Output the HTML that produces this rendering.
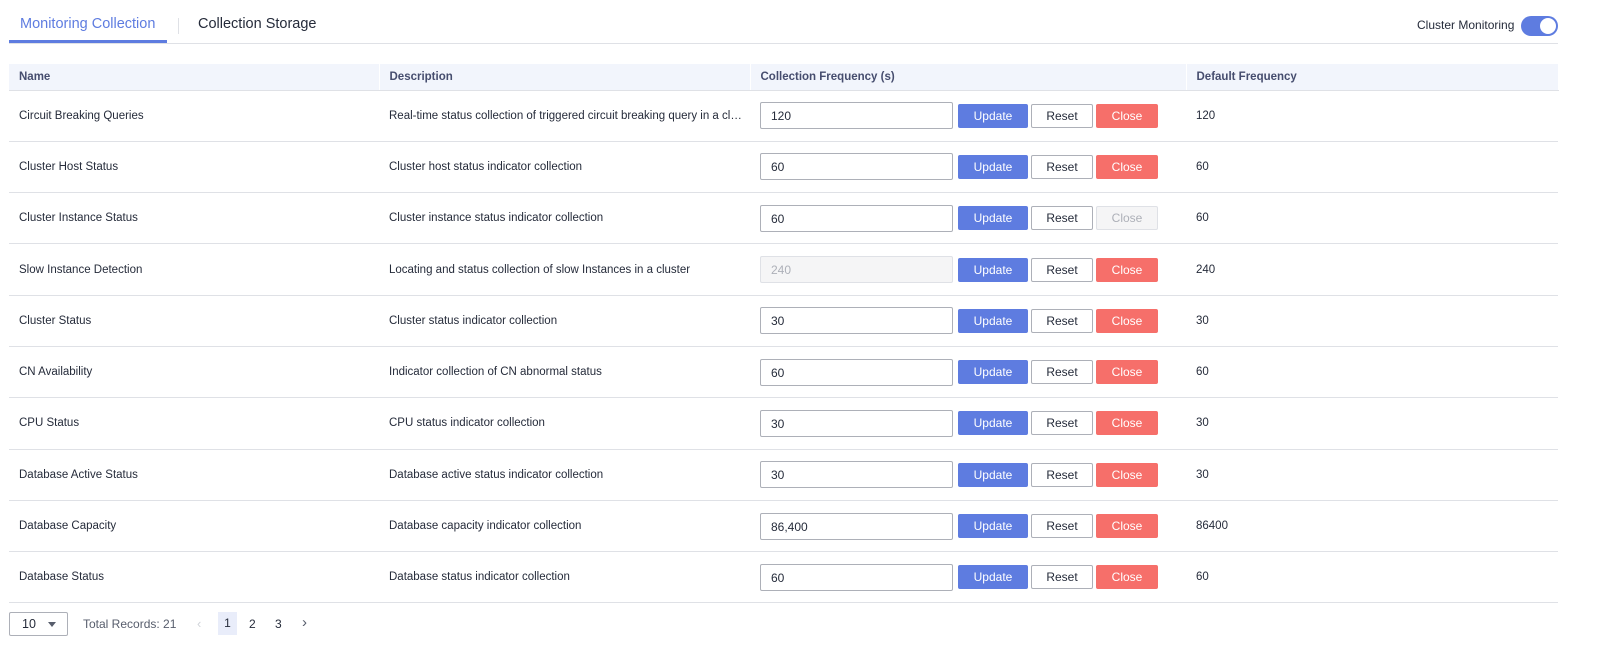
<!DOCTYPE html>
<html><head><meta charset="utf-8"><style>
*{box-sizing:border-box;margin:0;padding:0}
body{width:1619px;height:671px;background:#fff;font-family:"Liberation Sans",sans-serif;color:#252b3a;font-size:12px;position:relative;overflow:hidden}
.abs{position:absolute}
.tabline{left:9px;top:43px;width:1549px;height:1px;background:#dfe1e6}
.tab1{left:9px;top:40px;width:158px;height:3px;background:#5e7ce0}
.tt{top:16px;font-size:14.5px}
table{position:absolute;left:9px;top:64px;width:1549px;border-collapse:collapse;table-layout:fixed}
th{background:#f2f5fc;height:26px;text-align:left;font-weight:bold;font-size:11.5px;padding-left:10px;color:#464d6e;border-bottom:1px solid #dfe1e6;border-right:1px solid #fff}
td{height:51.3px;padding-left:10px;padding-right:8px;border-bottom:1px solid #dfe1e6;white-space:nowrap;overflow:hidden;text-overflow:ellipsis;font-size:11.5px}
.inp{display:inline-block;width:193px;height:27px;border:1px solid #adb0b8;border-radius:2px;padding-left:10px;padding-top:1px;line-height:25px;vertical-align:middle;font-size:12px}
.inp.dis{background:#f5f5f6;border-color:#dfe1e6;color:#adb0b8}
.b{display:inline-block;height:24px;line-height:22px;text-align:center;border-radius:2px;vertical-align:middle;font-size:12px;margin-left:3px}
.u{width:70px;background:#5e7ce0;color:#fff;border:1px solid #5e7ce0;margin-left:5px}
.r{width:62px;background:#fff;border:1px solid #adb0b8}
.c{width:62px;background:#f66f6a;color:#fff;border:1px solid #f66f6a}
.c.dis{background:#f5f5f6;border-color:#dfe1e6;color:#adb0b8}
</style></head><body>
<div class="abs tabline"></div><div class="abs tab1"></div>
<div class="abs tt" style="left:20px;color:#5e7ce0">Monitoring Collection</div>
<div class="abs" style="left:178px;top:18px;width:1px;height:16px;background:#dfe1e6"></div>
<div class="abs tt" style="left:198px">Collection Storage</div>
<div class="abs" style="left:1417px;top:18px;font-size:12px">Cluster Monitoring</div>
<div class="abs" style="left:1521px;top:16px;width:37px;height:20px;border-radius:10px;background:#5e7ce0"><div style="position:absolute;right:2px;top:2px;width:16px;height:16px;border-radius:50%;background:#fff"></div></div>
<table>
<colgroup><col style="width:370px"><col style="width:371px"><col style="width:436px"><col style="width:372px"></colgroup>
<tr><th>Name</th><th>Description</th><th>Collection Frequency (s)</th><th>Default Frequency</th></tr>
<tr><td>Circuit Breaking Queries</td><td>Real-time status collection of triggered circuit breaking query in a cluster</td><td><span class="inp">120</span><span class="b u">Update</span><span class="b r">Reset</span><span class="b c">Close</span></td><td>120</td></tr>
<tr><td>Cluster Host Status</td><td>Cluster host status indicator collection</td><td><span class="inp">60</span><span class="b u">Update</span><span class="b r">Reset</span><span class="b c">Close</span></td><td>60</td></tr>
<tr><td>Cluster Instance Status</td><td>Cluster instance status indicator collection</td><td><span class="inp">60</span><span class="b u">Update</span><span class="b r">Reset</span><span class="b c dis">Close</span></td><td>60</td></tr>
<tr><td>Slow Instance Detection</td><td>Locating and status collection of slow Instances in a cluster</td><td><span class="inp dis">240</span><span class="b u">Update</span><span class="b r">Reset</span><span class="b c">Close</span></td><td>240</td></tr>
<tr><td>Cluster Status</td><td>Cluster status indicator collection</td><td><span class="inp">30</span><span class="b u">Update</span><span class="b r">Reset</span><span class="b c">Close</span></td><td>30</td></tr>
<tr><td>CN Availability</td><td>Indicator collection of CN abnormal status</td><td><span class="inp">60</span><span class="b u">Update</span><span class="b r">Reset</span><span class="b c">Close</span></td><td>60</td></tr>
<tr><td>CPU Status</td><td>CPU status indicator collection</td><td><span class="inp">30</span><span class="b u">Update</span><span class="b r">Reset</span><span class="b c">Close</span></td><td>30</td></tr>
<tr><td>Database Active Status</td><td>Database active status indicator collection</td><td><span class="inp">30</span><span class="b u">Update</span><span class="b r">Reset</span><span class="b c">Close</span></td><td>30</td></tr>
<tr><td>Database Capacity</td><td>Database capacity indicator collection</td><td><span class="inp">86,400</span><span class="b u">Update</span><span class="b r">Reset</span><span class="b c">Close</span></td><td>86400</td></tr>
<tr><td>Database Status</td><td>Database status indicator collection</td><td><span class="inp">60</span><span class="b u">Update</span><span class="b r">Reset</span><span class="b c">Close</span></td><td>60</td></tr>
</table>
<div class="abs" style="left:9px;top:612px;width:59px;height:24px;border:1px solid #adb0b8;border-radius:2px;padding-left:12px;line-height:22px;font-size:12.5px">10<span style="position:absolute;left:38px;top:9px;border-left:4px solid transparent;border-right:4px solid transparent;border-top:5px solid #575d6c"></span></div>
<div class="abs" style="left:83px;top:617px;color:#575d6c">Total Records: 21</div>
<div class="abs" style="left:197px;top:616px;color:#d0d3d9;font-size:13px">&#8249;</div>
<div class="abs" style="left:218px;top:612px;width:19px;height:23px;background:#e9edfa;text-align:center;line-height:23px">1</div>
<div class="abs" style="left:249px;top:617px">2</div>
<div class="abs" style="left:275px;top:617px">3</div>
<div class="abs" style="left:302px;top:614px;font-size:15px;color:#575d6c">&#8250;</div>
</body></html>
